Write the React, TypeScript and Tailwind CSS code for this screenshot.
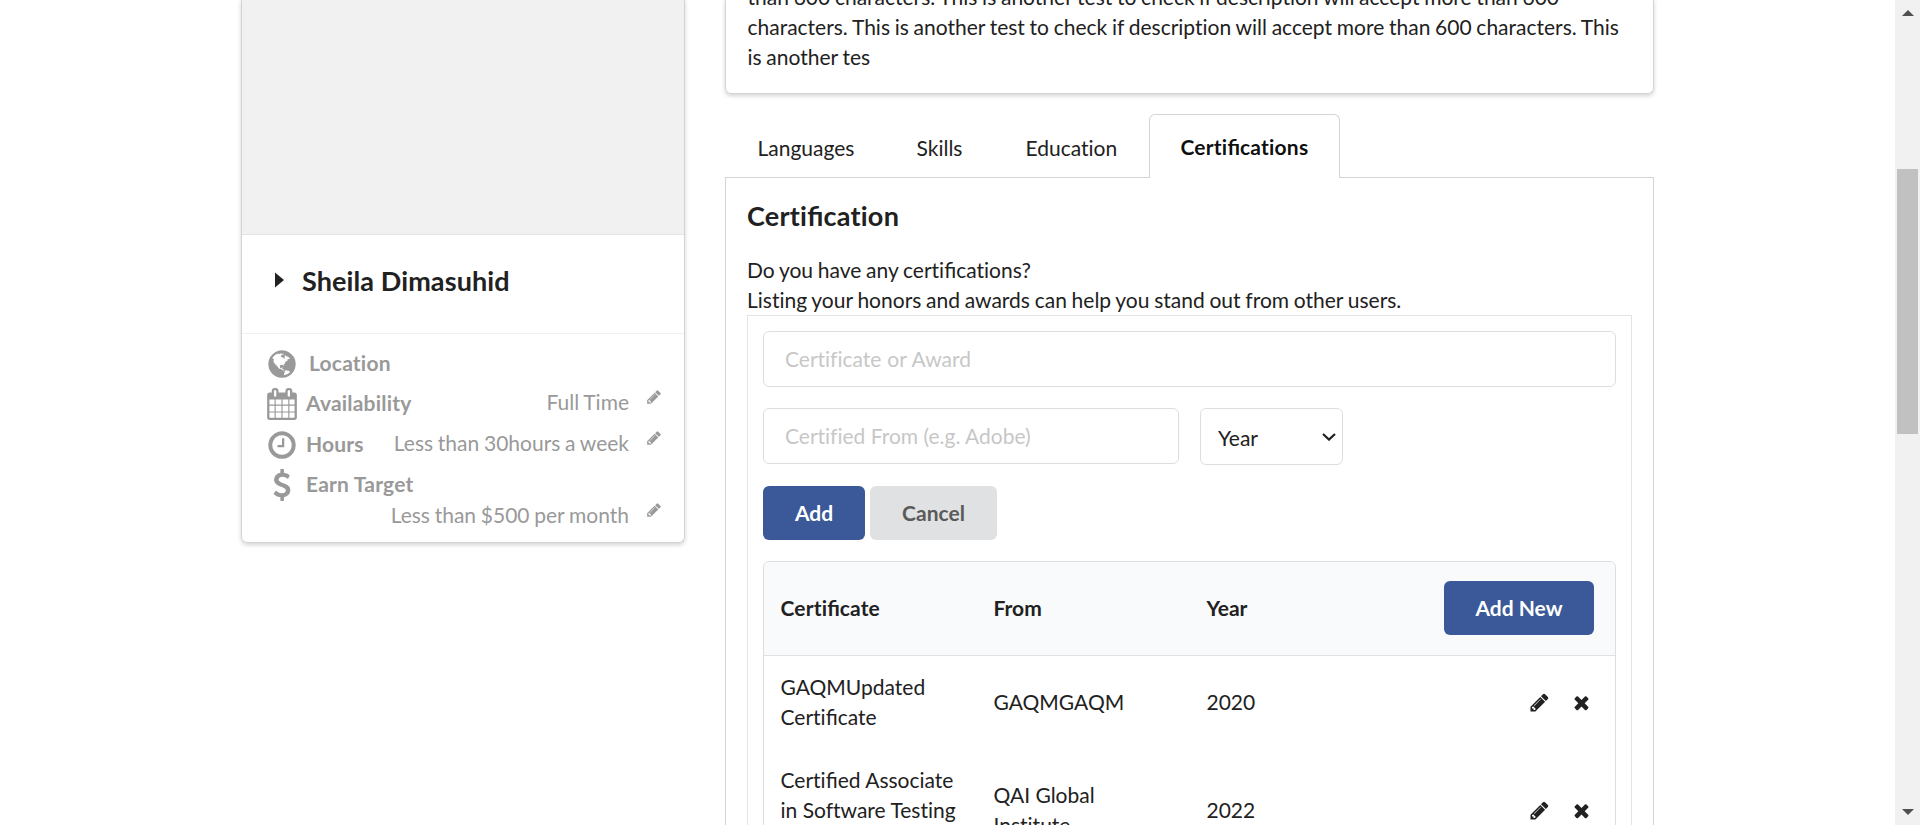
import React, { Fragment } from 'react';

const PENCIL =
  'M491 1536l91-91-235-235-91 91v107h128v128h107zm523-928q0-22-22-22-10 0-17 7l-542 542q-7 7-7 17 0 22 22 22 10 0 17-7l542-542q7-7 7-17zm-54-192l416 416-832 832h-416v-416zm683 96q0 53-37 90l-166 166-416-416 166-165q36-38 90-38 53 0 91 38l235 234q37 39 37 91z';
const TIMES =
  'M1490 1322q0 40-28 68l-136 136q-28 28-68 28t-68-28l-294-294-294 294q-28 28-68 28t-68-28l-136-136q-28-28-28-68t28-68l294-294-294-294q-28-28-28-68t28-68l136-136q28-28 68-28t68 28l294 294 294-294q28-28 68-28t68 28l136 136q28 28 28 68t-28 68l-294 294 294 294q28 28 28 68z';
const CALENDAR =
  'M192 1664h288v-288h-288v288zm352 0h320v-288h-320v288zm-352-352h288v-320h-288v320zm352 0h320v-320h-320v320zm-352-384h288v-288h-288v288zm736 736h320v-288h-320v288zm-384-736h320v-288h-320v288zm768 736h288v-288h-288v288zm-384-352h320v-320h-320v320zm-352-864v-288q0-13-9.5-22.5t-22.5-9.5h-64q-13 0-22.5 9.5t-9.5 22.5v288q0 13 9.5 22.5t22.5 9.5h64q13 0 22.5-9.5t9.5-22.5zm736 864h288v-320h-288v320zm-384-384h320v-288h-320v288zm384 0h288v-288h-288v288zm32-480v-288q0-13-9.5-22.5t-22.5-9.5h-64q-13 0-22.5 9.5t-9.5 22.5v288q0 13 9.5 22.5t22.5 9.5h64q13 0 22.5-9.5t9.5-22.5zm384-64v1280q0 52-38 90t-90 38h-1408q-52 0-90-38t-38-90v-1280q0-52 38-90t90-38h128v-96q0-66 47-113t113-47h64q66 0 113 47t47 113v96h384v-96q0-66 47-113t113-47h64q66 0 113 47t47 113v96h128q52 0 90 38t38 90z';
const CLOCK =
  'M1024 544v448q0 14-9 23t-23 9h-320q-14 0-23-9t-9-23v-64q0-14 9-23t23-9h224v-352q0-14 9-23t23-9h64q14 0 23 9t9 23zm416 352q0-148-73-273t-198-198-273-73-273 73-198 198-73 273 73 273 198 198 273 73 273-73 198-198 73-273zm224 0q0 209-103 385.5t-279.5 279.5-385.5 103-385.5-103-279.5-279.5-103-385.5 103-385.5 279.5-279.5 385.5-103 385.5 103 279.5 279.5 103 385.5z';
const DOLLAR =
  'M1362 1185q0 153-99.5 263.5t-258.5 136.5v175q0 14-9 23t-23 9h-135q-13 0-22.5-9.5t-9.5-22.5v-175q-66-9-127.5-31t-101.5-44.5-74-48-46.5-37.5-17.5-18q-17-21-2-41l103-135q7-10 23-12 15-2 24 9l2 2q113 99 243 125 37 8 74 8 81 0 142.5-43t61.5-122q0-28-15-53t-33.5-42-58.5-37.5-66-32-80-32.5q-39-16-61.5-25t-61.5-26.5-62.5-31-56.5-35.5-53.5-42.5-43.5-49-35.5-58-21-66.5-8.5-78q0-138 98-242t255-134v-180q0-13 9.5-22.5t22.5-9.5h135q14 0 23 9t9 23v176q57 6 110.5 23t87 33.5 63.5 37.5 39 29 15 14q17 18 5 38l-81 146q-8 15-23 16-14 3-27-7-3-3-14.5-12t-39-26.5-58.5-32-74.5-26-85.5-11.5q-95 0-155 43t-60 111q0 26 8.5 48t29.5 41.5 39.5 33 56 31 60.5 27 70 27.5q53 20 81 31.5t76 35 75.5 42.5 62 50 53 63.5 31.5 76.5 13 94z';
const GLOBE =
  'M896 128q209 0 385.5 103t279.5 279.5 103 385.5-103 385.5-279.5 279.5-385.5 103-385.5-103-279.5-279.5-103-385.5 103-385.5 279.5-279.5 385.5-103zm274 521q-2 1-9.5 9.5t-13.5 9.5q2 0 4.5-5t5-11 3.5-7q6-7 22-15 14-6 52-12 34-8 51 11-2-2 9.5-13t14.5-12q3-2 15-4.5t15-7.5l2-22q-12 1-17.5-7t-6.5-21q0 2-6 8 0-7-4.5-8t-11.5 1-9 1q-10-3-15-7.5t-8-16.5-4-15q-2-5-9.5-11t-9.5-10q-1-2-2.5-5.5t-3-6.5-4-5.5-5.5-2.5-7 5-7.5 10-4.5 5q-3-2-6-1.5t-4.5 1-4.5 3-5 3.5q-3 2-8.5 3t-8.5 2q15-5-1-11-10-4-16-3 9-4 7.5-12t-8.5-14h5q-1-4-8.5-8.5t-17.5-8.5-13-6q-8-5-34-9.5t-33-.5q-5 6-4.5 10.5t4 14 3.5 12.5q1 6-5.5 13t-6.5 12q0 7 14 15.5t10 21.5q-3 8-16 16t-16 12q-5 8-1.5 18.5t10.5 16.5q2 2 1.5 4t-3.5 4.5-5.5 4-6.5 3.5l-3 2q-11 5-20.5-6t-13.5-26q-7-25-16-30-23-8-29 1-5-13-41-26-25-9-58-4 6-1 0-15-7-15-19-12 3-6 4-17.5t1-13.5q3-13 12-23 1-1 7-8.5t9.5-13.5.5-6q35 4 50-11 5-5 11.5-17t10.5-17q9-6 14-5.5t14.5 5.5 14.5 5q14 1 15.5-11t-7.5-20q12 1 3-17-4-7-8-9-12-4-27 5-8 4 2 8-1-1-9.5 10.5t-16.5 17.5-16-5q-1-1-5.5-13.5t-9.5-13.5q-8 0-16 15 3-8-11-15t-24-8q19-12-8-27-7-4-20.5-5t-19.5 4q-5 7-5.5 11.5t5 8 10.5 5.5 11.5 4 8.5 3q14 10 8 14-2 1-8.5 3.5t-11.5 4.5-6 4q-3 4 0 14t-2 14q-5-5-9-17.5t-7-16.5q7 9-25 6l-10-1q-4 0-16 2t-20.5 1-13.5-8q-4-8 0-20 1-4 4-2-4-3-11-9.5t-10-8.5q-46 15-94 41 6 1 12-1 5-2 13-6.5t10-5.5q34-14 42-7l5-5q14 16 20 25-7-4-30-1-20 6-22 12 7 12 5 18-4-3-11.5-10t-14.5-11-15-5q-16 0-22 1-146 80-235 222 7 7 12 8 4 1 5 9t2.5 11 11.5-3q9 8 3 19 1-1 44 27 19 17 21 21 3 11-10 18-1-2-9-9t-9-4q-3 5 .5 18.5t10.5 12.5q-7 0-9.5 16t-2.5 35.5-1 23.5l2 1q-3 12 5.5 34.5t21.5 19.5q-13 3 20 43 6 8 8 9 3 2 12 7.5t15 10 10 10.5q4 5 10 22.5t14 23.5q-2 6 9.5 20t10.5 23q-1 0-2.5 1t-2.5 1q3 7 15.5 14t15.5 13q1 3 2 10t3 11 8 2q2-20-24-62-15-25-17-29-3-5-5.5-15.5t-4.5-14.5q2 0 6 1.5t8.5 3.5 7.5 4 2 3q-3 7 2 17.5t12 18.5 17 19 12 13q6 6 14 19.5t0 13.5q9 0 20 10.5t17 19.5q5 8 8 26t5 24q2 7 8.5 13.5t12.5 9.5l16 8 13 7q5 2 18.5 10.5t21.5 11.5q10 4 16 4t14.5-2.5 13.5-3.5q15-2 29 15t21 21q36 19 55 11-2 1 .5 7.5t8 15.5 9 14.5 5.5 8.5q5 6 18 15t18 15q6-4 7-9-3 8 7 20t18 10q14-3 14-32-31 15-49-18 0-1-2.5-5.5t-4-8.5-2.5-8.5 0-7.5 5-3q9 0 10-3.5t-2-12.5-4-13q-1-8-11-20t-12-15q-5 9-16 8t-16-9q0 1-1.5 5.5t-1.5 6.5q-13 0-15-1 1-3 2.5-17.5t3.5-22.5q1-4 5.5-12t7.5-14.5 4-12.5-4.5-9.5-17.5-2.5q-19 1-26 20-1 3-3 10.5t-5 11.5-9 7q-7 3-24 2t-24-5q-13-8-22.5-29t-9.5-37q0-10 2.5-26.5t3-25-5.5-24.5q3-2 9-9.5t10-10.5q2-1 4.5-1.5t4.5 0 4-1.5 3-6q-1-1-4-3-3-3-4-3 7 3 28.5-1.5t27.5 1.5q15 11 22-2 0-1-2.5-9.5t-.5-13.5q5 27 29 9 3 3 15.5 5t17.5 5q3 2 7 5.5t5.5 4.5 5-.5 8.5-6.5q10 14 12 24 11 40 19 44 7 3 11 2t4.5-9.5 0-14-1.5-12.5l-1-8v-18l-1-8q-15-3-18.5-12t1.5-18.5 15-18.5q1-1 8-3.5t15.5-6.5 12.5-8q21-19 15-35 7 0 11-9-1 0-5-3t-7.5-5-4.5-2q9-5 2-16 5-3 7.5-11t7.5-10q9 12 21 2 8-8 1-16 5-7 20.5-10.5t18.5-9.5q7 2 8-2t1-12 3-12q4-5 15-9t13-5l17-11q3-4 0-4 18 2 31-11 10-11-6-20 3-6-3-9.5t-15-5.5q3-1 11.5-.5t10.5-1.5q15-10-7-16-17-5-43 12zm-163 877q206-36 351-189-3-3-12.5-4.5t-12.5-3.5q-18-7-24-8 1-7-2.5-13t-8-9-12.5-8-11-7q-2-2-7-6t-7-5.5-7.5-4.5-8.5-2-10 1l-3 1q-3 1-5.5 2.5t-5.5 3-4 3 0 2.5q-21-17-36-22-5-1-11-5.5t-10.5-7-10-1.5-11.5 7q-5 5-6 15t-2 13q-7-5 0-17.5t2-18.5q-3-6-10.5-4.5t-12 4.5-11.5 8.5-9 6.5-8.5 5.5-8.5 7.5q-3 4-6 12t-5 11q-2-4-11.5-6.5t-9.5-5.5q2 10 4 35t5 38q7 31-12 48-27 25-29 40-4 22 12 26 0 7-8 20.5t-7 21.5q0 6 2 16z';

function Glyph({ d, className }: { d: string; className: string }) {
  return (
    <svg viewBox="0 0 1792 1792" fill="currentColor" className={`shrink-0 overflow-visible ${className}`} aria-hidden="true">
      <path d={d} />
    </svg>
  );
}

/* Sets "fi" as a ligature while the surrounding text keeps its letters separate. */
function Text({ children }: { children: string }) {
  return (
    <>
      {children.split('fi').map((part, i) => (
        <Fragment key={i}>
          {i > 0 && <span className="tracking-normal [font-variant-ligatures:common-ligatures]">fi</span>}
          {part}
        </Fragment>
      ))}
    </>
  );
}

function ProfileRow({
  icon,
  label,
  value,
  rowClass,
  labelClass = 'pl-2',
}: {
  icon: string;
  label: string;
  value?: string;
  rowClass: string;
  labelClass?: string;
}) {
  return (
    <div className={`flex items-start ${rowClass}`}>
      <Glyph d={icon} className="size-8" />
      <span className={`font-bold tracking-[0.2px] [word-spacing:0px] ${labelClass}`}>{label}</span>
      {value && <ProfileValue value={value} />}
    </div>
  );
}

function ProfileValue({ value }: { value: string }) {
  return (
    <span className="-mt-px ml-auto flex">
      {value}
      <Glyph d={PENCIL} className="mt-[2px] ml-[17px] size-4" />
    </span>
  );
}

const rows = [
  { name: 'GAQMUpdated Certificate', from: 'GAQMGAQM', year: '2020' },
  { name: 'Certified Associate in Software Testing (CAST)', from: 'QAI Global Institute', year: '2022' },
];

const columns = 'grid grid-cols-[213px_213px_213px_1fr] items-center';

export default function App() {
  return (
    <div className="flex h-[825px] w-full overflow-hidden bg-white font-['Lato',sans-serif] text-[21px] leading-[30px] text-[#212121] [font-variant-ligatures:no-common-ligatures] [word-spacing:-0.65px]">
      <main className="flex h-full min-w-0 flex-1 items-start gap-10 overflow-hidden pl-[241px]">
        <aside className="w-[444px] shrink-0 rounded-b-md border border-t-0 border-[#d4d4d5] shadow-[0_1.5px_4.5px_0_#d4d4d5]">
          <div className="h-[235px] border-b border-[#e4e4e4] bg-[#f1f1f1]" />
          <div className="flex h-[99px] items-start border-b border-[#f0f0f0] pt-[29px] pl-[33px]">
            <svg viewBox="0 0 9 16" className="mt-2 mr-[18px] h-4 w-[9px]" fill="currentColor" aria-hidden="true">
              <path d="M0 .5L9 8L0 15.5Z" />
            </svg>
            <h2 className="text-[27px] leading-[34px] font-bold tracking-[0.1px] [word-spacing:0px]">Sheila Dimasuhid</h2>
          </div>
          <div className="h-[208px] pt-[14px] pr-[22px] pl-6 text-[#999]">
            <ProfileRow icon={GLOBE} label="Location" rowClass="h-10" labelClass="pl-[11px]" />
            <ProfileRow icon={CALENDAR} label="Availability" value="Full Time" rowClass="h-[41px]" />
            <ProfileRow icon={CLOCK} label="Hours" value="Less than 30hours a week" rowClass="h-10" />
            <ProfileRow icon={DOLLAR} label="Earn Target" rowClass="h-8" />
            <div className="flex">
              <ProfileValue value="Less than $500 per month" />
            </div>
          </div>
        </aside>

        <section className="w-[929px] shrink-0">
          <div className="flex h-[94px] items-end rounded-b-md border border-t-0 border-[#d4d4d5] px-[21.5px] pb-[21px] shadow-[0_1.5px_4.5px_0_#d4d4d5]">
            <p>
              than 600 characters. This is another test to check if description will accept more than 600
              <br />
              characters. This is another test to check if description will accept more than 600 characters. This
              <br />
              is another tes
            </p>
          </div>

          <nav className="mt-5 flex h-16 items-end border-b border-[#d4d4d5]">
            <a className="h-11 w-[159px] pl-[32.5px]">Languages</a>
            <a className="h-11 w-[109px] pl-[32.5px]">Skills</a>
            <a className="h-11 w-[156px] pl-[32.5px]">Education</a>
            <a className="-mb-px h-16 w-[191px] rounded-t-md border border-b-0 border-[#d4d4d5] bg-white pt-[17px] pl-[30.5px] font-bold tracking-[0.2px] text-black/95">
              <Text>Certifications</Text>
            </a>
          </nav>

          <div className="border-x border-[#d4d4d5] px-[21px] pt-5">
            <h3 className="text-[27px] leading-[35px] font-bold tracking-[0.25px]">
              <Text>Certification</Text>
            </h3>
            <p className="mt-[22px]">
              <Text>Do you have any certifications?</Text>
              <br />
              Listing your honors and awards can help you stand out from other users.
            </p>

            <div className="border border-[#e4e4e5] p-[15px]">
              <input
                className="block h-14 w-full rounded-md border border-[#dededf] px-[21px] pb-[2px] [word-spacing:0.5px] placeholder:text-[#c7c7c7]"
                placeholder="Certificate or Award"
              />
              <div className="mt-[21px] flex items-start gap-[21px]">
                <input
                  className="h-14 w-[416px] rounded-md border border-[#dededf] px-[21px] pb-[2px] placeholder:text-[#c7c7c7]"
                  placeholder="Certified From (e.g. Adobe)"
                />
                <div className="flex h-[57px] w-[143px] items-center justify-between rounded-md border border-[#dededf] pr-[6px] pl-[17px]">
                  <span className="pt-[2px]">Year</span>
                  <svg viewBox="0 0 14 8" className="h-2 w-[14px]" fill="none" stroke="currentColor" strokeWidth="2.2" aria-hidden="true">
                    <path d="M1 1L7 6.6L13 1" />
                  </svg>
                </div>
              </div>
              <div className="mt-[21px] flex gap-[5px] font-bold">
                <button className="h-[54px] w-[102px] rounded-md bg-[#3b5998] text-white">Add</button>
                <button className="h-[54px] w-[127px] rounded-md bg-[#e0e1e2] text-[#5a5a5a]">Cancel</button>
              </div>

              <div className="mt-[21px] h-[400px] rounded-md border border-[#dededf]">
                <div className={`${columns} h-[94px] rounded-t-md border-b border-[#e0e1e2] bg-[#f9fafb] pb-px font-bold`}>
                  <span className="pl-[16.5px] tracking-[0.15px]">
                    <Text>Certificate</Text>
                  </span>
                  <span className="pl-[16.5px]">From</span>
                  <span className="pl-[16.5px]">Year</span>
                  <div className="flex justify-end pr-[21px]">
                    <button className="h-[54px] w-[150px] rounded-md bg-[#3b5998] text-white [word-spacing:0px]">Add New</button>
                  </div>
                </div>
                {rows.map((row) => (
                  <div key={row.name} className={`${columns} pt-4 pb-[17px] [word-spacing:0px]`}>
                    <span className="px-[16.5px]">
                      <Text>{row.name}</Text>
                    </span>
                    <span className="px-[16.5px]">{row.from}</span>
                    <span className="px-[16.5px]">{row.year}</span>
                    <div className="flex items-center justify-end gap-[21px] pr-[23px]">
                      <Glyph d={PENCIL} className="size-[21px]" />
                      <Glyph d={TIMES} className="size-[21px]" />
                    </div>
                  </div>
                ))}
              </div>
            </div>
          </div>
        </section>
      </main>

      <div className="flex h-full w-[25px] shrink-0 flex-col items-center bg-[#f1f1f1]">
        <svg viewBox="0 0 12 6" className="mt-[10px] h-[6px] w-3" fill="#505050" aria-hidden="true">
          <path d="M0 6L6 0L12 6Z" />
        </svg>
        <div className="mt-[153px] h-[265px] w-[21px] bg-[#c1c1c1]" />
        <svg viewBox="0 0 12 6" className="mt-auto mb-[10px] h-[6px] w-3" fill="#505050" aria-hidden="true">
          <path d="M0 0L6 6L12 0Z" />
        </svg>
      </div>
    </div>
  );
}
